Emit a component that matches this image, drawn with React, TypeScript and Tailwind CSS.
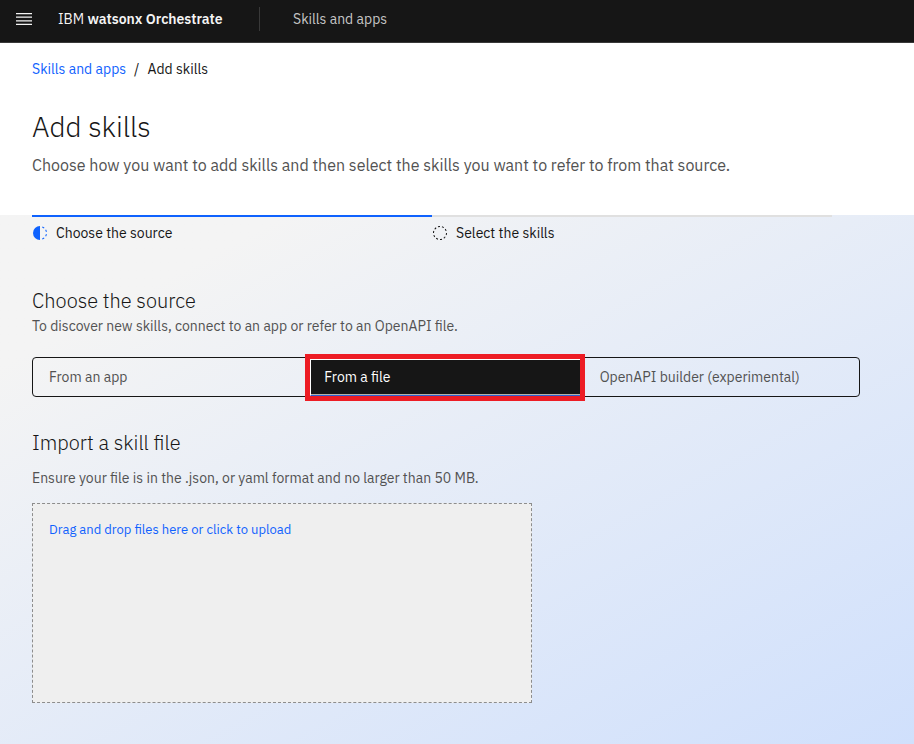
import { useState } from "react";

function MenuIcon() {
  return (
    <svg className="h-5 w-5" viewBox="0 0 20 20" fill="currentColor" aria-hidden="true">
      <path d="M2 14.8H18V16H2zM2 11.2H18V12.4H2zM2 7.6H18V8.8H2zM2 4H18V5.2H2z" />
    </svg>
  );
}

function IncompleteIcon() {
  return (
    <svg className="h-4 w-4 shrink-0 text-[#0f62fe]" viewBox="0 0 32 32" fill="currentColor" aria-hidden="true">
      <path d="M23.7642 6.8593l1.2851-1.5315A13.976 13.976 0 0 0 20.8672 2.887l-.6836 1.8776A11.9729 11.9729 0 0 1 23.7642 6.8593z" />
      <path d="M27.8127 14l1.9677-.4128A13.8888 13.8888 0 0 0 28.14 9.0457L26.4087 10A12.52 12.52 0 0 1 27.8127 14z" />
      <path d="M20.1836 27.2354l.6836 1.8776a13.976 13.976 0 0 0 4.1821-2.4408l-1.2851-1.5315A11.9729 11.9729 0 0 1 20.1836 27.2354z" />
      <path d="M26.4087 22L28.14 23a14.14 14.14 0 0 0 1.6382-4.5872L27.8127 18.0659A12.1519 12.1519 0 0 1 26.4087 22z" />
      <path d="M16 30V2a14 14 0 0 0 0 28z" />
    </svg>
  );
}

function CircleDashIcon() {
  return (
    <svg className="h-4 w-4 shrink-0 text-[#161616]" viewBox="0 0 32 32" fill="currentColor" aria-hidden="true">
      <path d="M7.7 4.7a14.7 14.7 0 0 0-3 3.1L6.3 9A13.26 13.26 0 0 1 8.9 6.3z" />
      <path d="M4.6 12.3l-1.9-.6A12.51 12.51 0 0 0 2 16H4A11.48 11.48 0 0 1 4.6 12.3z" />
      <path d="M2.7 20.4a14.4 14.4 0 0 0 2 3.9l1.6-1.2a12.89 12.89 0 0 1-1.7-3.3z" />
      <path d="M7.8 27.3a14.4 14.4 0 0 0 3.9 2l.6-1.9A12.89 12.89 0 0 1 9 25.7z" />
      <path d="M11.7 2.7l.6 1.9A11.48 11.48 0 0 1 16 4V2A12.51 12.51 0 0 0 11.7 2.7z" />
      <path d="M24.2 27.3a15.18 15.18 0 0 0 3.1-3.1L25.7 23A11.53 11.53 0 0 1 23 25.7z" />
      <path d="M27.4 19.7l1.9.6A15.47 15.47 0 0 0 30 16H28A11.48 11.48 0 0 1 27.4 19.7z" />
      <path d="M29.2 11.6a14.4 14.4 0 0 0-2-3.9L25.6 8.9a12.89 12.89 0 0 1 1.7 3.3z" />
      <path d="M24.1 4.6a14.4 14.4 0 0 0-3.9-2l-.6 1.9a12.89 12.89 0 0 1 3.3 1.7z" />
      <path d="M20.3 29.3l-.6-1.9A11.48 11.48 0 0 1 16 28v2A21.42 21.42 0 0 0 20.3 29.3z" />
    </svg>
  );
}

const sources = ["From an app", "From a file", "OpenAPI builder (experimental)"];

function SourceSwitcher() {
  const [selected, setSelected] = useState(1);
  return (
    <div role="tablist" aria-label="Source" className="mt-5 grid h-10 max-w-[828px] grid-cols-3 rounded border border-[#161616]">
      {sources.map((label, i) => (
        <button
          key={label}
          type="button"
          role="tab"
          aria-selected={i === selected}
          onClick={() => setSelected(i)}
          className={
            i === selected
              ? "relative bg-[#161616] px-4 text-left text-white"
              : "px-4 text-left text-[#525252]"
          }
        >
          {label}
          {i === selected && (
            <span className="absolute -top-1 -right-px -bottom-[5px] -left-[3px] border-5 border-[#ed1c24]">
              <span className="block h-full border-t border-b border-l border-white border-b-[#2f5fd0] shadow-[inset_0_-1px_0_#b4b4ac]" />
            </span>
          )}
        </button>
      ))}
    </div>
  );
}

export default function App() {
  return (
    <div className="flex min-h-screen flex-col bg-white font-['IBM_Plex_Sans',Roboto,sans-serif] text-sm text-[#161616]">
      <header className="flex h-[43px] items-center border-b border-[#393939] bg-[#161616] pb-1 text-[#f4f4f4]">
        <button type="button" aria-label="Open menu" className="ml-3.5">
          <MenuIcon />
        </button>
        <a href="#home" className="ml-6 w-[202px] border-r border-[#393939] leading-6">
          IBM <span className="font-semibold">watsonx Orchestrate</span>
        </a>
        <a href="#skills" className="ml-[33px] text-[#c6c6c6]">Skills and apps</a>
      </header>

      <div className="h-[172px] px-8 pt-4">
        <nav aria-label="Breadcrumb" className="flex gap-2 leading-5">
          <a href="#skills" className="text-[#0f62fe]">Skills and apps</a>
          <span>/</span>
          <span>Add skills</span>
        </nav>
        <h1 className="mt-7 text-[28px] leading-10 font-light">Add skills</h1>
        <p className="mt-1.5 text-base leading-6 text-[#525252]">
          Choose how you want to add skills and then select the skills you want to refer to from that source.
        </p>
      </div>

      <main className="flex-1 bg-linear-152 from-[#f4f4f4] from-15% to-[#d0e0fc] px-8 pb-10">
        <ol className="flex max-w-[800px] leading-5">
          <li aria-current="step" className="flex flex-1 items-center gap-2 border-t-2 border-[#0f62fe] pt-1.5">
            <IncompleteIcon />
            Choose the source
          </li>
          <li className="flex flex-1 items-center gap-2 border-t-2 border-[#e0e0e0] pt-1.5">
            <CircleDashIcon />
            Select the skills
          </li>
        </ol>

        <h2 className="mt-11 text-xl leading-7 font-light">Choose the source</h2>
        <p className="leading-[22px] text-[#525252]">
          To discover new skills, connect to an app or refer to an OpenAPI file.
        </p>
        <SourceSwitcher />

        <h2 className="mt-8 text-xl leading-7 font-light">Import a skill file</h2>
        <p className="mt-2.5 leading-[22px] text-[#525252]">
          Ensure your file is in the .json, or yaml format and no larger than 50 MB.
        </p>
        <button
          type="button"
          className="mt-3.5 flex h-[200px] w-full max-w-[500px] items-start border border-dashed border-[#8d8d8d] bg-[#efefef] p-4 text-[13px] leading-5 text-[#0f62fe]"
        >
          Drag and drop files here or click to upload
        </button>
      </main>
    </div>
  );
}
